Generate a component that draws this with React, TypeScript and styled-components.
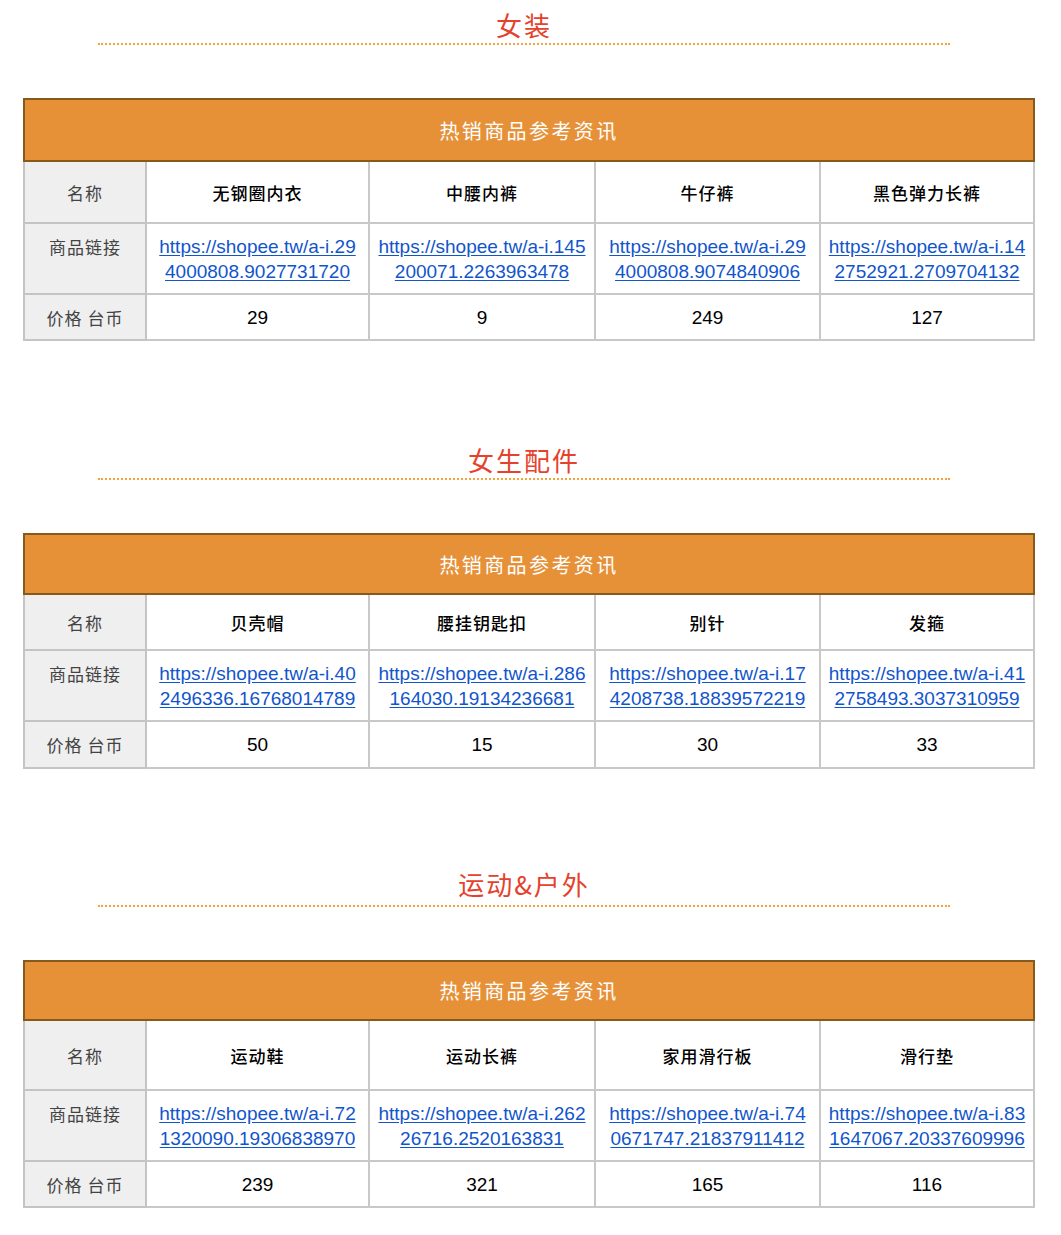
import styled, { createGlobalStyle } from 'styled-components';

const GlobalStyle = createGlobalStyle`
  body {
    margin: 0;
    background: #ffffff;
    font-family: "Liberation Sans", "Noto Sans CJK SC", sans-serif;
  }
`;

type Product = {
  name: string;
  link: [string, string];
  price: string;
};

type Category = {
  title: string;
  gap: number;
  titlePad: number;
  headerRow: number;
  nameRow: number;
  priceRow: number;
  products: Product[];
};

const categories: Category[] = [
  {
    title: '女装',
    gap: 9,
    titlePad: 0,
    headerRow: 62,
    nameRow: 62,
    priceRow: 46,
    products: [
      { name: '无钢圈内衣', link: ['https://shopee.tw/a-i.29', '4000808.9027731720'], price: '29' },
      { name: '中腰内裤', link: ['https://shopee.tw/a-i.145', '200071.2263963478'], price: '9' },
      { name: '牛仔裤', link: ['https://shopee.tw/a-i.29', '4000808.9074840906'], price: '249' },
      { name: '黑色弹力长裤', link: ['https://shopee.tw/a-i.14', '2752921.2709704132'], price: '127' },
    ],
  },
  {
    title: '女生配件',
    gap: 103,
    titlePad: 0,
    headerRow: 60,
    nameRow: 56,
    priceRow: 47,
    products: [
      { name: '贝壳帽', link: ['https://shopee.tw/a-i.40', '2496336.16768014789'], price: '50' },
      { name: '腰挂钥匙扣', link: ['https://shopee.tw/a-i.286', '164030.19134236681'], price: '15' },
      { name: '别针', link: ['https://shopee.tw/a-i.17', '4208738.18839572219'], price: '30' },
      { name: '发箍', link: ['https://shopee.tw/a-i.41', '2758493.3037310959'], price: '33' },
    ],
  },
  {
    title: '运动&户外',
    gap: 99,
    titlePad: 3,
    headerRow: 59,
    nameRow: 70,
    priceRow: 46,
    products: [
      { name: '运动鞋', link: ['https://shopee.tw/a-i.72', '1320090.19306838970'], price: '239' },
      { name: '运动长裤', link: ['https://shopee.tw/a-i.262', '26716.2520163831'], price: '321' },
      { name: '家用滑行板', link: ['https://shopee.tw/a-i.74', '0671747.21837911412'], price: '165' },
      { name: '滑行垫', link: ['https://shopee.tw/a-i.83', '1647067.20337609996'], price: '116' },
    ],
  },
];

const columnWidths = [122, 223, 226, 225, 214];

const Page = styled.div`
  width: 1061px;
  padding-bottom: 28px;
`;

const Section = styled.section<{ $gap: number }>`
  padding-top: ${(p) => p.$gap}px;
`;

const Title = styled.h2<{ $pad: number }>`
  margin: 0 0 0 98px;
  width: 852px;
  height: ${(p) => 34 + p.$pad}px;
  box-sizing: content-box;
  border-bottom: 2px dotted #f5a23a;
  font-family: "Noto Sans CJK SC", sans-serif;
  font-size: 26px;
  font-weight: 400;
  line-height: 32px;
  letter-spacing: 2px;
  text-align: center;
  color: #e5412b;
`;

const Table = styled.table`
  margin: 53px 0 0 23px;
  width: 1010px;
  table-layout: fixed;
  border-collapse: collapse;
  border: 2px solid #b9b9b9;
`;

const HeaderCell = styled.th<{ $h: number }>`
  height: ${(p) => p.$h - 2}px;
  padding: 0;
  background: #e69138;
  border: 2px solid #865a1a;
  color: #ffffff;
  font-family: "Noto Sans CJK SC", sans-serif;
  font-size: 20px;
  font-weight: 400;
  letter-spacing: 2.4px;
  text-align: center;
  vertical-align: middle;
`;

const Row = styled.tr<{ $h?: number }>`
  ${(p) => (p.$h ? `height: ${p.$h}px;` : '')}
`;

const LabelCell = styled.td<{ $top?: boolean }>`
  padding: ${(p) => (p.$top ? '10px 4px 9px' : '0 4px')};
  background: #efefef;
  border: 2px solid #c4c4c4;
  color: #434343;
  font-family: "Noto Sans CJK SC", sans-serif;
  font-size: 17px;
  line-height: 25px;
  letter-spacing: 1px;
  text-align: center;
  vertical-align: ${(p) => (p.$top ? 'top' : 'middle')};
`;

const Cell = styled.td<{ $kind: 'name' | 'link' | 'price' }>`
  padding: ${(p) => (p.$kind === 'link' ? '10px 0 9px' : '0')};
  background: #ffffff;
  border: 2px solid #c8c8c8;
  color: #000000;
  font-family: ${(p) =>
    p.$kind === 'name'
      ? '"Noto Sans CJK SC", sans-serif'
      : '"Liberation Sans", Arial, sans-serif'};
  font-size: ${(p) => (p.$kind === 'name' ? '17px' : '19px')};
  font-weight: ${(p) => (p.$kind === 'name' ? 500 : 400)};
  letter-spacing: ${(p) => (p.$kind === 'name' ? '1px' : '0')};
  line-height: 25px;
  text-align: center;
  vertical-align: ${(p) => (p.$kind === 'link' ? 'top' : 'middle')};
  white-space: nowrap;
`;

const ProductLink = styled.a`
  color: #1155cc;
  text-decoration: underline;
  text-underline-offset: 2px;
`;

const ProductTable = ({ cat }: { cat: Category }) => (
  <Table>
    <colgroup>
      {columnWidths.map((w, i) => (
        <col key={i} style={{ width: w }} />
      ))}
    </colgroup>
    <tbody>
      <tr>
        <HeaderCell colSpan={5} $h={cat.headerRow}>
          热销商品参考资讯
        </HeaderCell>
      </tr>
      <Row $h={cat.nameRow}>
        <LabelCell>名称</LabelCell>
        {cat.products.map((p) => (
          <Cell key={p.name} $kind="name">
            {p.name}
          </Cell>
        ))}
      </Row>
      <Row>
        <LabelCell $top>商品链接</LabelCell>
        {cat.products.map((p) => (
          <Cell key={p.name} $kind="link">
            <ProductLink href="#">
              {p.link[0]}
              <br />
              {p.link[1]}
            </ProductLink>
          </Cell>
        ))}
      </Row>
      <Row $h={cat.priceRow}>
        <LabelCell>价格 台币</LabelCell>
        {cat.products.map((p) => (
          <Cell key={p.name} $kind="price">
            {p.price}
          </Cell>
        ))}
      </Row>
    </tbody>
  </Table>
);

const App = () => (
  <Page>
    <GlobalStyle />
    {categories.map((cat) => (
      <Section key={cat.title} $gap={cat.gap}>
        <Title $pad={cat.titlePad}>{cat.title}</Title>
        <ProductTable cat={cat} />
      </Section>
    ))}
  </Page>
);

export default App;
